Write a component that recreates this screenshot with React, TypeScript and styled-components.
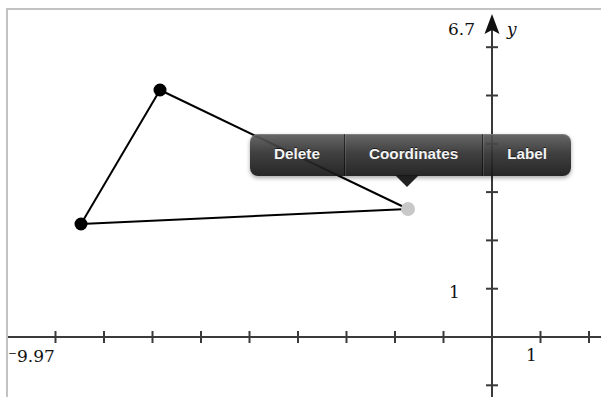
import styled, { createGlobalStyle } from 'styled-components';

const GlobalStyle = createGlobalStyle`
	html, body {
		margin: 0;
		padding: 0;
		background: #ffffff;
	}
`;

const Page = styled.div`
	width: 601px;
	height: 397px;
	overflow: hidden;
	position: relative;
	background: #ffffff;
`;

const Frame = styled.div`
	margin: 8px 0 0 6px;
	height: 389px;
	border-top: 2px solid #c2c2c2;
	border-left: 2px solid #c2c2c2;
	box-sizing: border-box;

	svg {
		display: block;
	}
`;

const AxisText = styled.text<{ italic?: boolean }>`
	font-family: 'DejaVu Serif', 'Liberation Serif', serif;
	font-size: 17px;
	font-style: ${(p) => (p.italic ? 'italic' : 'normal')};
	fill: #111111;
`;

const Popup = styled.div`
	position: absolute;
	left: 250px;
	top: 134px;
	height: 42px;
	display: flex;
	border-radius: 8px;
	background: linear-gradient(
		180deg,
		rgba(92, 92, 92, 0.93) 0%,
		rgba(50, 50, 50, 0.93) 45%,
		rgba(22, 22, 22, 0.93) 100%
	);
	box-shadow: 0 2px 4px rgba(0, 0, 0, 0.35), inset 0 1px 0 rgba(255, 255, 255, 0.18);
`;

const PopupItem = styled.div<{ last?: boolean }>`
	display: flex;
	align-items: center;
	justify-content: center;
	padding: 0 24px 2px;
	font-family: 'Liberation Sans', Arial, sans-serif;
	font-weight: bold;
	font-size: 15.3px;
	color: #f4f4f4;
	text-shadow: 0 -1px 0 rgba(0, 0, 0, 0.6);
	border-right: ${(p) => (p.last ? 'none' : '1px solid rgba(0, 0, 0, 0.55)')};
	box-shadow: ${(p) => (p.last ? 'none' : '1px 0 0 rgba(255, 255, 255, 0.12)')};
`;

const Pointer = styled.div`
	position: absolute;
	left: 395px;
	top: 175px;
	width: 0;
	height: 0;
	border-left: 12px solid transparent;
	border-right: 12px solid transparent;
	border-top: 12px solid rgba(22, 22, 22, 0.95);
`;

const UX = 48.5;
const UY = 48.3;
const OX = 492;
const OY = 337;

const A = { x: 160, y: 90 };
const B = { x: 81, y: 224 };
const C = { x: 408, y: 209 };

export default function App() {
	const xTicks = [];
	for (let k = -9; k <= 2; k++) {
		if (k === 0) continue;
		xTicks.push(OX + k * UX);
	}
	const yTicks = [];
	for (let k = -1; k <= 6; k++) {
		if (k === 0) continue;
		yTicks.push(OY - k * UY);
	}

	return (
		<>
			<GlobalStyle />
			<Page>
				<Frame>
					<svg width={593} height={387} viewBox='8 10 593 387'>
						{/* axes */}
						<line x1={8} y1={OY} x2={601} y2={OY} stroke='#3a3a3a' strokeWidth={2} />
						<line x1={OX} y1={28} x2={OX} y2={397} stroke='#3a3a3a' strokeWidth={2} />
						<polygon points={`${OX},14 ${OX - 7.5},34 ${OX},30 ${OX + 7.5},34`} fill='#111' />
						{xTicks.map((x) => (
							<line key={x} x1={x} y1={OY - 6} x2={x} y2={OY + 6} stroke='#3a3a3a' strokeWidth={2} />
						))}
						{yTicks.map((y) => (
							<line key={y} x1={OX - 6} y1={y} x2={OX + 6} y2={y} stroke='#3a3a3a' strokeWidth={2} />
						))}
						<AxisText x={448} y={35}>6.7</AxisText>
						<AxisText x={507} y={35} italic>
							y
						</AxisText>
						<AxisText x={449} y={298}>1</AxisText>
						<AxisText x={526} y={361}>1</AxisText>
						<AxisText x={8} y={362}>⁻9.97</AxisText>

						{/* triangle */}
						<g stroke='#000' strokeWidth={2} fill='none'>
							<line x1={A.x} y1={A.y} x2={B.x} y2={B.y} />
							<line x1={A.x} y1={A.y} x2={C.x} y2={C.y} />
							<line x1={B.x} y1={B.y} x2={C.x} y2={C.y} />
						</g>
						<circle cx={A.x} cy={A.y} r={6.5} fill='#000' />
						<circle cx={B.x} cy={B.y} r={6.5} fill='#000' />
						<circle cx={C.x} cy={C.y} r={7} fill='#c8c8c8' />
					</svg>
				</Frame>

				<Popup>
					<PopupItem>Delete</PopupItem>
					<PopupItem>Coordinates</PopupItem>
					<PopupItem last>Label</PopupItem>
				</Popup>
				<Pointer />
			</Page>
		</>
	);
}
